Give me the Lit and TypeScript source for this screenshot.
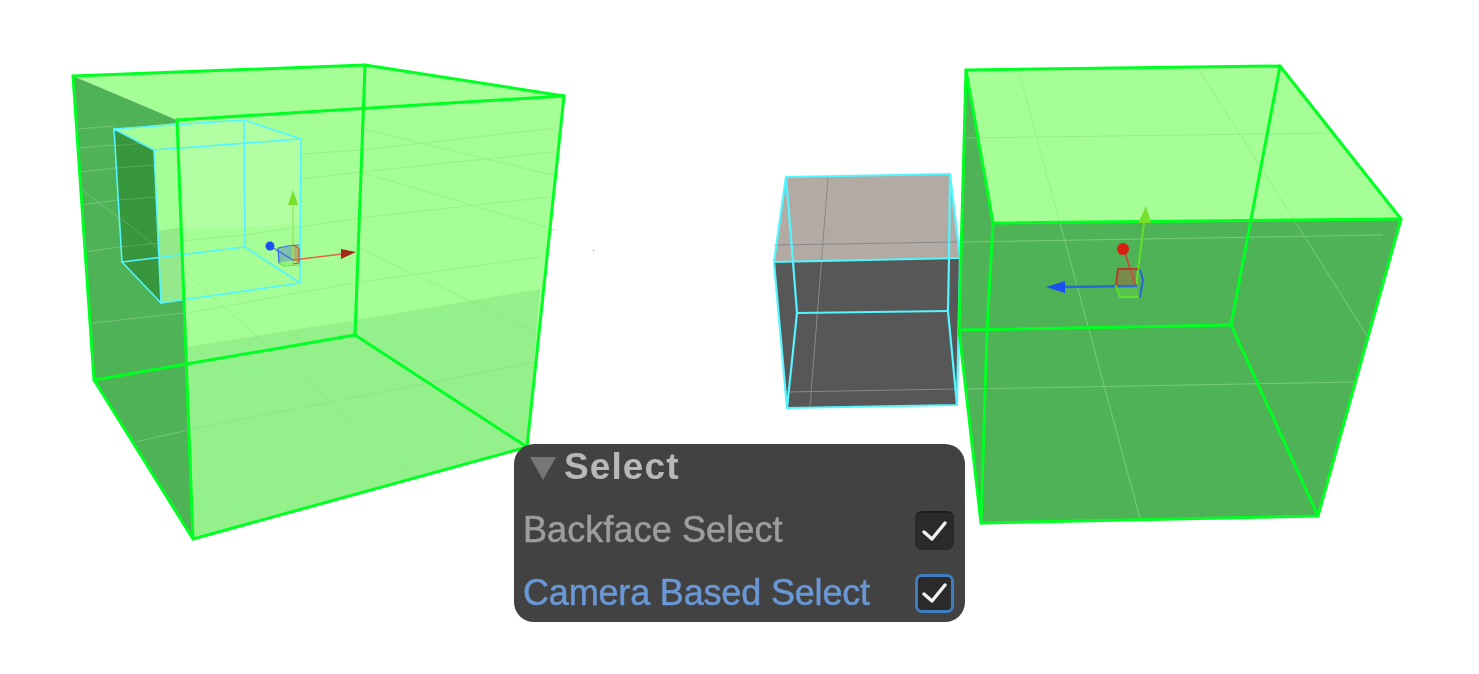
import { LitElement, html, css, svg } from "lit";
import { customElement } from "lit/decorators.js";

type Pt = [number, number];
const pts = (p: Pt[]) => p.map((q) => q.join(",")).join(" ");
const poly = (cls: string, p: Pt[]) => svg`<polygon class=${cls} points=${pts(p)}></polygon>`;
const path = (cls: string, p: Pt[]) => svg`<polyline class=${cls} points=${pts(p)}></polyline>`;

/* Left cube */
const A: Pt = [73, 76], B: Pt = [365, 65], C: Pt = [564, 96], D: Pt = [177, 120];
const E: Pt = [94, 380], F: Pt = [355, 335], G: Pt = [527, 447], H: Pt = [193, 539];
/* Nested box in the left cube */
const a: Pt = [114, 129], b: Pt = [244, 120], c: Pt = [301, 139], d: Pt = [154, 150];
const a2: Pt = [122, 262], b2: Pt = [245, 247], c2: Pt = [300, 283], d2: Pt = [161, 303];
/* Right cube */
const P1: Pt = [966, 70], P2: Pt = [1280, 66], P3: Pt = [1401, 219], P4: Pt = [993, 223];
const Q1: Pt = [959, 330], Q2: Pt = [1231, 325], Q3: Pt = [1318, 516], Q4: Pt = [981, 523], Q5: Pt = [987, 330];
/* Grey box */
const t1: Pt = [786, 177], t2: Pt = [950, 174], t3: Pt = [960, 258], t4: Pt = [774, 262];
const u1: Pt = [787, 408], u2: Pt = [957, 405];
const i1: Pt = [793, 262], i2: Pt = [949, 258], i3: Pt = [797, 313], i4: Pt = [948, 311];

const leftGridOnDark: Pt[][] = [
  [[77, 129], [114, 126]],
  [[78, 148], [114, 145]],
  [[80, 172], [116, 168]],
  [[82, 205], [118, 200]],
  [[85, 252], [120, 247]],
  [[92, 323], [183, 313]],
  [[80, 188], [160, 250]],
  [[135, 442], [188, 430]],
];
const holeGrid: Pt[][] = [
  [[114, 146], [154, 142]],
  [[116, 168], [155, 165]],
  [[118, 200], [157, 197]],
  [[120, 247], [159, 243]],
  [[118, 216], [160, 250]],
];
const leftGrid: Pt[][] = [
  [[187, 313], [353, 283], [540, 257]],
  [[158, 243], [245, 235], [360, 218], [550, 197]],
  [[157, 197], [360, 172], [553, 152]],
  [[180, 165], [245, 158], [360, 150], [556, 128]],
  [[160, 250], [253, 333], [330, 402], [418, 482]],
  [[360, 128], [560, 177]],
  [[360, 172], [556, 230]],
  [[353, 245], [537, 333]],
  [[188, 430], [330, 402], [536, 362]],
];

const rightGrid: Pt[][] = [
  [[1019, 72], [1140, 518]],
  [[1198, 68], [1368, 337]],
  [[965, 138], [1333, 133]],
  [[963, 242], [1382, 235]],
  [[967, 389], [1355, 382]],
];
const greyGrid: Pt[][] = [
  [[828, 178], [810, 407]],
  [[775, 245], [959, 242]],
  [[787, 392], [955, 389]],
];

@customElement("app-root")
export class AppRoot extends LitElement {
  static styles = css`
    :host {
      display: block;
      position: relative;
      width: 1479px;
      height: 674px;
      overflow: hidden;
      background: #fff;
    }
    .scene { display: block; width: 1479px; height: 674px; }
    polygon { stroke: none; }
    polyline { fill: none; stroke-linejoin: round; stroke-linecap: round; }
    .light { fill: #a6ff96; }
    .floor { fill: #94f08a; }
    .dark { fill: #4fb257; }
    .hole { fill: #38963c; }
    .front { fill: #a6ff96; }
    .front-low { fill: #94e98a; }
    .glow { fill: #b2ffa3; }
    .beige { fill: #b3aaa4; }
    .grey { fill: #575757; }
    .edge { stroke: #00ff22; stroke-width: 3; }
    .cyan { stroke: #55f5ff; stroke-width: 1.6; }
    .cyan-bold { stroke: #55f5ff; stroke-width: 2.2; }
    .g-light { stroke: #86dd7c; stroke-width: 1; opacity: .45; }
    .g-dark { stroke: #7cc882; stroke-width: 1; opacity: .8; }
    .g-hole { stroke: #62ad64; stroke-width: 1; opacity: .8; }
    .g-right { stroke: #8fe08c; stroke-width: 1; opacity: .6; }
    .g-grey { stroke: #888; stroke-width: 1; }
    .axis-g { stroke: #9be85a; stroke-width: 1.4; }
    .axis-r { stroke: #e0634c; stroke-width: 1.4; }
    .axis-b { stroke: #3f6fe8; stroke-width: 1.4; }
    .axis-g2 { stroke: #5fe02c; stroke-width: 2; }
    .axis-r2 { stroke: #c4523a; stroke-width: 2; }
    .axis-b2 { stroke: #2b68d8; stroke-width: 2.4; }
    .cone-g { fill: #78e02c; }
    .cone-r { fill: #a32a1c; }
    .cone-b { fill: #1c50f0; }
    .ball-b { fill: #1c50f0; }
    .ball-r { fill: #d8200f; }
    .q-blue { fill: rgba(70, 120, 190, .45); }
    .q-red { fill: rgba(170, 90, 60, .45); }
    .q-green { fill: rgba(110, 220, 70, .35); }
    .o-blue { stroke: #3a62e8; stroke-width: 1.2; }
    .o-red { stroke: #c4503e; stroke-width: 1.2; }
    .o-green { stroke: #6fe04a; stroke-width: 1.2; }
    .o-red2 { stroke: #b23c2a; stroke-width: 2; }
    .o-green2 { stroke: #5fe02c; stroke-width: 2; }
    .o-blue2 { stroke: #2b62d8; stroke-width: 2; }
    .speck { fill: #777; }

    .panel {
      position: absolute;
      left: 514px;
      top: 444px;
      width: 451px;
      height: 178px;
      box-sizing: border-box;
      padding: 0 11px 0 9px;
      border-radius: 20px;
      background: #424242;
      font-family: "Liberation Sans", Arial, sans-serif;
      display: flex;
      flex-direction: column;
    }
    .head {
      display: flex;
      align-items: center;
      height: 46px;
      gap: 8px;
      padding-left: 7px;
      color: #b8b8b8;
      font-size: 37px;
      font-weight: 700;
      letter-spacing: 1.1px;
    }
    .tri { width: 26px; height: 24px; flex: none; margin-top: 4px; }
    .tri polygon { fill: #767676; }
    .row {
      display: flex;
      align-items: center;
      justify-content: space-between;
      height: 40px;
      font-size: 36px;
      color: #9d9d9d;
      letter-spacing: .1px;
      -webkit-text-stroke: .5px currentColor;
    }
    .row.first { margin-top: 20px; }
    .row.second { margin-top: 23px; color: #6a98d6; letter-spacing: -.17px; }
    .label { filter: blur(.55px); white-space: nowrap; }
    .head span { filter: blur(.55px); }
    .box {
      width: 39px;
      height: 39px;
      box-sizing: border-box;
      border-radius: 7px;
      background: #2a2a2a;
      border-top: 2px solid #1c1c1c;
      display: flex;
      align-items: center;
      justify-content: center;
      flex: none;
    }
    .box.focus { border: 3px solid #3f7dc2; }
    .box svg { width: 25px; height: 22px; display: block; }
    .box polyline { fill: none; stroke: #f2f2f2; stroke-width: 3.4; stroke-linecap: round; stroke-linejoin: round; }
  `;

  private check() {
    return html`<svg viewBox="0 0 25 22"><polyline points="2,12 10,19 23,3"></polyline></svg>`;
  }

  render() {
    return html`
      <svg class="scene" viewBox="0 0 1479 674">
        <!-- left cube -->
        ${poly("light", [A, B, C, G, H, D])}
        ${poly("floor", [[187, 347], [355, 320], [540, 289], G, H])}
        ${poly("dark", [A, D, H, E])}
        ${leftGrid.map((l) => path("g-light", l))}
        ${leftGridOnDark.map((l) => path("g-dark", l))}
        <!-- nested box -->
        ${poly("hole", [a, d, d2, a2])}
        ${holeGrid.map((l) => path("g-hole", l))}
        ${poly("front", [a, [178, 123], [178, 147], d])}
        ${poly("front", [d, [178, 147], [184, 299], d2])}
        ${poly("front-low", [[158, 231], [182, 227], [184, 299], d2])}
        ${poly("glow", [[179, 123], b, c, [300, 224], [185, 229]])}
        ${[
          [a, b], [b, c], [c, d], [d, a], [a, a2], [b, b2], [c, c2], [d, d2],
          [a2, b2], [b2, c2], [c2, d2], [d2, a2],
        ].map((l) => path("cyan", l as Pt[]))}
        <!-- left cube edges -->
        ${[
          [A, B, C], [D, C], [A, E, H, G, C], [D, H], [B, F, G], [E, F],
        ].map((l) => path("edge", l as Pt[]))}
        <!-- left gizmo -->
        ${poly("q-blue", [[278, 248], [293, 246], [293, 260], [279, 263]])}
        ${poly("q-red", [[293, 246], [299, 248], [299, 263], [293, 260]])}
        ${poly("q-green", [[279, 263], [293, 260], [299, 263], [284, 266]])}
        ${path("axis-g", [[293, 260], [293, 205]])}
        ${path("axis-r", [[293, 260], [342, 254]])}
        ${path("axis-b", [[270, 246], [293, 260]])}
        ${poly("cone-g", [[293, 190], [288, 205], [298, 205]])}
        ${poly("cone-r", [[341, 249], [356, 252], [341, 259]])}
        <circle class="ball-b" cx="270" cy="246" r="4.5"></circle>
        ${path("o-blue", [[299, 245], [288, 246], [278, 248], [279, 263]])}
        ${path("o-red", [[293, 245], [299, 248], [299, 263], [293, 264]])}
        ${path("o-green", [[279, 263], [284, 266], [299, 265]])}

        <!-- grey box -->
        ${poly("beige", [t1, t2, t3, t4])}
        ${poly("grey", [t4, t3, u2, u1])}
        ${greyGrid.map((l) => path("g-grey", l))}
        ${[
          [t1, t2, t3, t4, t1], [t4, u1, u2, t3], [t1, i1, i3, u1], [t2, i2, i4, u2], [i3, i4],
        ].map((l) => path("cyan-bold", l as Pt[]))}

        <!-- right cube -->
        ${poly("dark", [P1, P3, Q3, Q4, Q1])}
        ${poly("light", [P1, P2, P3, P4])}
        ${rightGrid.map((l) => path("g-right", l))}
        ${[
          [P1, P2, P3, Q3, Q4, Q1, P1], [P1, P4, P3], [P4, Q5, Q4], [P2, Q2, Q3], [Q1, Q2],
        ].map((l) => path("edge", l as Pt[]))}
        <!-- right gizmo -->
        ${poly("q-red", [[1118, 269], [1137, 269], [1136, 286], [1116, 286]])}
        ${poly("q-green", [[1116, 286], [1136, 286], [1140, 297], [1120, 297]])}
        ${path("axis-g2", [[1136, 286], [1144, 223]])}
        ${path("axis-r2", [[1136, 286], [1124, 250]])}
        ${path("axis-b2", [[1136, 286], [1064, 287]])}
        ${path("o-red2", [[1116, 286], [1118, 269], [1137, 269]])}
        ${path("o-green2", [[1116, 286], [1120, 297], [1140, 297]])}
        ${path("o-blue2", [[1140, 270], [1143, 280], [1140, 297]])}
        ${poly("cone-g", [[1146, 206], [1138, 223], [1151, 223]])}
        ${poly("cone-b", [[1046, 287], [1065, 281], [1065, 293]])}
        <circle class="ball-r" cx="1123" cy="249" r="6"></circle>
        <rect class="speck" x="593" y="250" width="1" height="1"></rect>
      </svg>

      <section class="panel">
        <div class="head">
          <svg class="tri" viewBox="0 0 26 24"><polygon points="0,0 26,0 13,23"></polygon></svg>
          <span>Select</span>
        </div>
        <div class="row first">
          <span class="label">Backface Select</span>
          <div class="box">${this.check()}</div>
        </div>
        <div class="row second">
          <span class="label">Camera Based Select</span>
          <div class="box focus">${this.check()}</div>
        </div>
      </section>
    `;
  }
}
